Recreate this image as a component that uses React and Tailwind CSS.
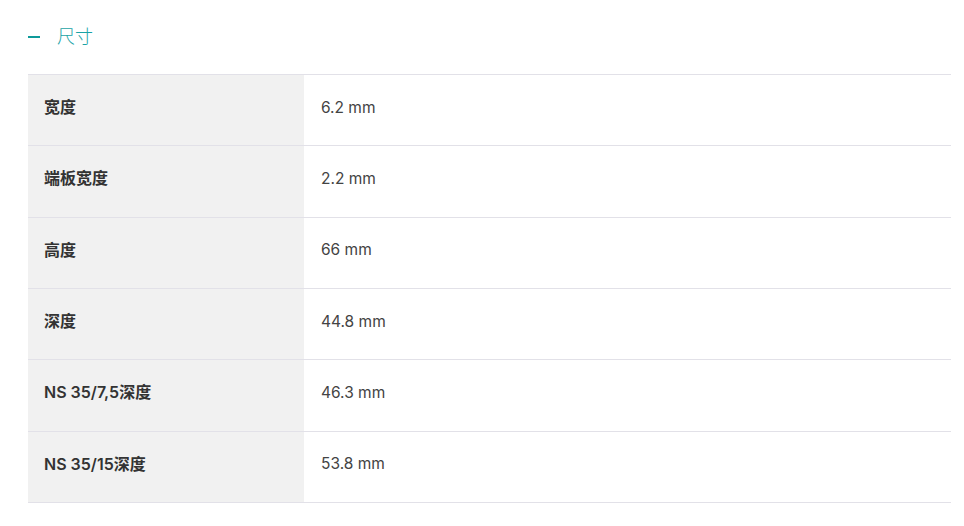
import React from 'react';

const rows = [
  ['宽度', '6.2 mm'],
  ['端板宽度', '2.2 mm'],
  ['高度', '66 mm'],
  ['深度', '44.8 mm'],
  ['NS 35/7,5深度', '46.3 mm'],
  ['NS 35/15深度', '53.8 mm'],
];

export default function App() {
  return (
    <div
      className="w-[964px] h-[526px] bg-white pl-[28px] pr-[13px]"
      style={{ fontFamily: 'Inter, "Noto Sans CJK SC", sans-serif' }}
    >
      {/* Section header */}
      <div className="flex items-center h-[74px]">
        <span className="block w-[12px] h-[2px] bg-[#0e9a9a]" />
        <span className="ml-[17px] text-[18px] font-light text-[#1aa3a6] leading-none">尺寸</span>
      </div>

      {/* Table */}
      <div className="border-t border-[#e2e1e8]">
        {rows.map(([label, value]) => (
          <div key={label} className="flex h-[71.33px] border-b border-[#e2e1e8]">
            <div className="w-[276px] bg-[#f1f1f1] flex items-center pl-[16px] pb-[6px] text-[16px] font-semibold text-[#333]">
              {label}
            </div>
            <div className="flex-1 flex items-center pl-[17px] pb-[6px] text-[15.5px] text-[#444]">
              {value}
            </div>
          </div>
        ))}
      </div>
    </div>
  );
}
